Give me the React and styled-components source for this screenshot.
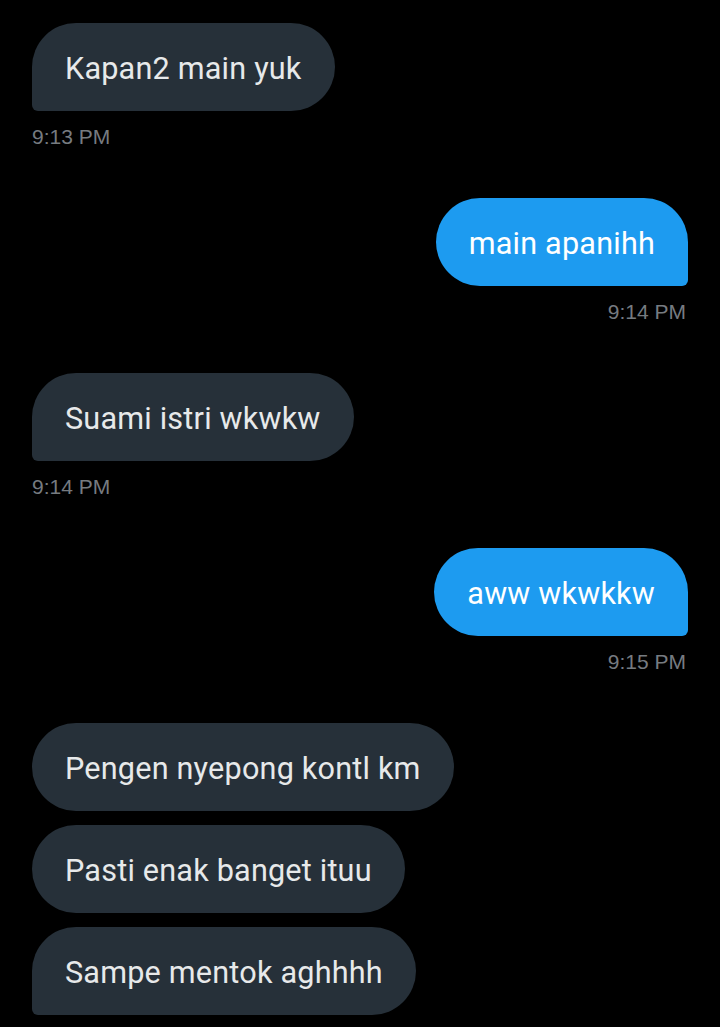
import styled, { createGlobalStyle } from "styled-components";

const GlobalStyle = createGlobalStyle`
  html, body {
    margin: 0;
    padding: 0;
    background: #000;
  }
  body {
    font-family: Roboto, "Noto Sans", "Liberation Sans", sans-serif;
  }
`;

const Page = styled.div`
  width: 720px;
  min-height: 1027px;
  background: #000;
  padding: 23px 32px 14px;
  box-sizing: border-box;
  display: flex;
  flex-direction: column;
  gap: 49px;
`;

const Group = styled.div`
  display: flex;
  flex-direction: column;
  align-items: ${(p) => (p.$mine ? "flex-end" : "flex-start")};
  gap: 14px;
`;

const Bubble = styled.div`
  height: 88px;
  box-sizing: border-box;
  display: flex;
  align-items: center;
  padding: 2px 33px 0;
  font-size: 30.6px;
  letter-spacing: 0.2px;
  white-space: nowrap;
  border-radius: 44px;
  color: ${(p) => (p.$mine ? "#ffffff" : "#e7e9ea")};
  background: ${(p) => (p.$mine ? "#1d9bf0" : "#263039")};
  ${(p) =>
    p.$tail && (p.$mine ? "border-bottom-right-radius: 6px;" : "border-bottom-left-radius: 6px;")}
`;

const Time = styled.div`
  font-family: "Liberation Sans", Arial, sans-serif;
  font-size: 21px;
  line-height: 24px;
  color: #767b80;
  padding: 0 2px 0 0;
`;

const messages = [
  { mine: false, texts: ["Kapan2 main yuk"], time: "9:13 PM" },
  { mine: true, texts: ["main apanihh"], time: "9:14 PM" },
  { mine: false, texts: ["Suami istri wkwkw"], time: "9:14 PM" },
  { mine: true, texts: ["aww wkwkkw"], time: "9:15 PM" },
  {
    mine: false,
    texts: ["Pengen nyepong kontl km", "Pasti enak banget ituu", "Sampe mentok aghhhh"],
  },
];

const App = () => {
  return (
    <Page>
      <GlobalStyle />
      {messages.map((m, i) => (
        <Group key={i} $mine={m.mine}>
          {m.texts.map((t, j) => (
            <Bubble key={j} $mine={m.mine} $tail={j === m.texts.length - 1}>
              {t}
            </Bubble>
          ))}
          {m.time && <Time>{m.time}</Time>}
        </Group>
      ))}
    </Page>
  );
};

export default App;
